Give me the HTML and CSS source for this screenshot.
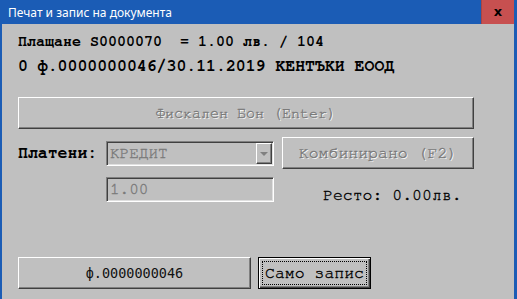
FILE: index.html
```html
<!DOCTYPE html>
<html>
<head>
    <meta charset="utf-8">
    <title>Печат и запис на документа</title>
    <link rel="stylesheet" href="styles.css">
</head>
<body>

<div class="window">
    <div class="titlebar">
        <div class="title">Печат и запис на документа</div>
        <div class="close">x</div>
    </div>

    <div class="client">
        <div class="info1">Плащане S0000070&nbsp;&nbsp;= 1.00 лв. / 104</div>
        <div class="info2">0 ф.0000000046/30.11.2019 КЕНТЪКИ ЕООД</div>

        <div class="btn btn-fiscal disabled">Фискален Бон (Enter)</div>

        <div class="row row-pay">
            <div class="label">Платени:</div>
            <div class="sunken combo">
                <div class="combo-text">КРЕДИТ</div>
                <div class="btn combo-drop"><span class="arrow"></span></div>
            </div>
            <div class="btn btn-combo disabled">Комбинирано (F2)</div>
        </div>

        <div class="row row-amount">
            <div class="sunken field">1.00</div>
            <div class="change">Ресто: 0.00лв.</div>
        </div>

        <div class="row row-bottom">
            <div class="btn btn-doc">ф.0000000046</div>
            <div class="btn btn-save">Само запис</div>
        </div>
    </div>
</div>

</body>
</html>
```

FILE: styles.css
```css
BODY {
    margin : 0;
    background-color : #c0c0c0;
}

.window {
    width : 517px;
    height : 299px;
    display : flex;
    flex-direction : column;
    background-color : #1b5cb5;
    overflow : hidden;
}

/* title bar */
.titlebar {
    height : 24px;
    flex : none;
    display : flex;
    align-items : center;
}
.title {
    flex : 1;
    padding-left : 8px;
    color : #fff;
    font-family : "Noto Sans", "Open Sans", sans-serif;
    font-size : 12px;
}
.close {
    width : 33px;
    height : 24px;
    margin-right : 3px;
    box-sizing : border-box;
    border-left : 1px solid #a84545;
    background-color : #c75050;
    display : flex;
    align-items : center;
    justify-content : center;
    font-family : "DejaVu Sans", sans-serif;
    font-size : 13px;
    font-weight : bold;
    color : #000;
    padding-bottom : 1px;
}

/* client area */
.client {
    flex : 1;
    margin : 0 3px 0 2px;
    padding : 9px 0 0 16px;
    background-color : #c0c0c0;
    font-family : "Nimbus Mono PS", "Nimbus Mono L", "FreeMono", "Courier 10 Pitch", "Liberation Mono", monospace;
    color : #000;
    -webkit-text-stroke : 0.35px;
}
.info1 {
    font-size : 15px;
    line-height : 18px;
    font-weight : bold;
    white-space : pre;
    -webkit-text-stroke : 0;
}
.info2 {
    margin-top : 5px;
    font-size : 16.5px;
    line-height : 20px;
    font-weight : bold;
    white-space : pre;
    -webkit-text-stroke : 0;
}

.row {
    display : flex;
}

/* classic 3d controls */
.btn {
    box-sizing : border-box;
    border : 1px solid;
    border-color : #fff #404040 #404040 #fff;
    box-shadow : inset -1px -1px #808080;
    background-color : #c0c0c0;
    display : flex;
    align-items : center;
    justify-content : center;
    white-space : pre;
}
.disabled {
    color : #7a7a7a;
    text-shadow : 1px 1px #fff;
}
.sunken {
    box-sizing : border-box;
    border : 1px solid;
    border-color : #808080 #fff #fff #808080;
    box-shadow : inset 1px 1px #404040, inset -1px -1px #dfdfdf;
    padding : 1px;
    background-color : #c0c0c0;
}

.btn-fiscal {
    margin-top : 21px;
    width : 456px;
    height : 32px;
    font-size : 15px;
}

.row-pay {
    margin-top : 8px;
    height : 32px;
    align-items : center;
}
.label {
    width : 88px;
    font-size : 16.5px;
    line-height : 20px;
    font-weight : bold;
    -webkit-text-stroke : 0;
}
.combo {
    width : 168px;
    height : 25px;
    display : flex;
}
.combo-text {
    flex : 1;
    padding-left : 2px;
    font-size : 16px;
    line-height : 21px;
    color : #7a7a7a;
}
.combo-drop {
    width : 16px;
    height : 21px;
}
.arrow {
    width : 0;
    height : 0;
    border-left : 4px solid transparent;
    border-right : 4px solid transparent;
    border-top : 4px solid #808080;
    margin-top : 1px;
}
.btn-combo {
    margin-left : 8px;
    width : 192px;
    height : 32px;
    font-size : 16.5px;
}

.row-amount {
    margin-top : 8px;
    align-items : flex-end;
}
.field {
    margin-left : 88px;
    width : 168px;
    height : 25px;
    padding-left : 3px;
    font-size : 16px;
    line-height : 21px;
    color : #7a7a7a;
}
.change {
    margin-left : 49px;
    font-size : 16.5px;
    line-height : 14px;
}

.row-bottom {
    margin-top : 55px;
}
.btn-doc {
    width : 233px;
    height : 32px;
    font-family : "DejaVu Sans Mono", monospace;
    font-size : 13.5px;
    color : #111;
    -webkit-text-stroke : 0;
}
.btn-save {
    margin-left : 7px;
    width : 113px;
    height : 32px;
    border : 1px solid #000;
    box-shadow : inset 1px 1px #fff, inset -1px -1px #404040, inset -2px -2px #808080;
    outline : 1px dotted #000;
    outline-offset : -5px;
    font-size : 16.5px;
}
```
